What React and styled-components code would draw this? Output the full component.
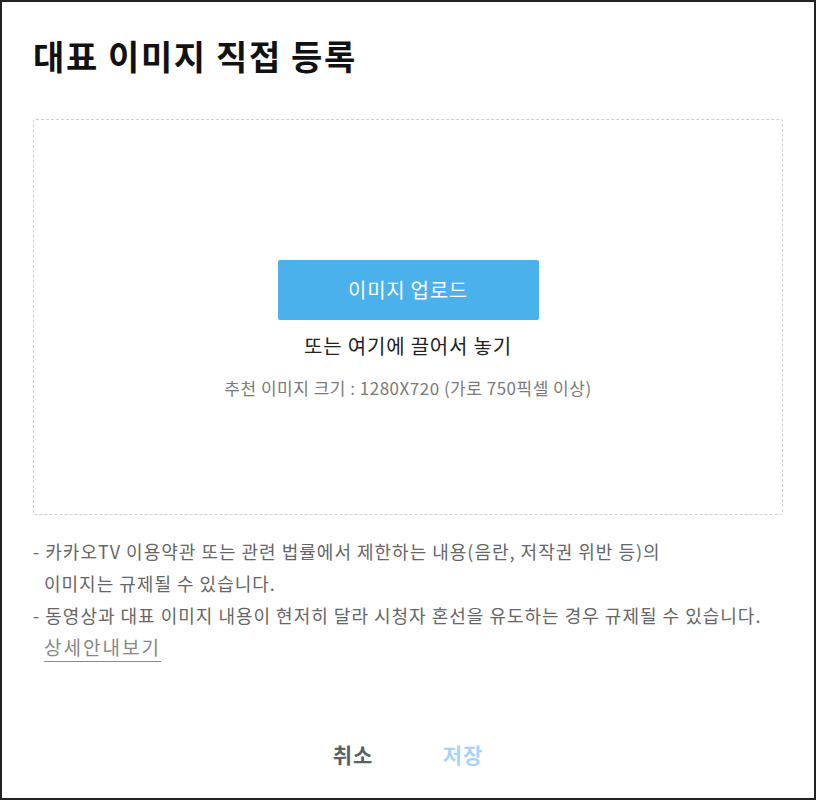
import React from 'react';
import styled, { createGlobalStyle } from 'styled-components';

const GlobalStyle = createGlobalStyle`
  html, body {
    margin: 0;
    padding: 0;
    background: #fff;
  }

  body {
    font-family: "Noto Sans CJK KR", "Noto Sans", sans-serif;
  }
`;

function App() {
  return (
    <>
      <GlobalStyle />
      <Modal>
        <Title>대표 이미지 직접 등록</Title>
        <DropZone>
          <UploadButton type="button">이미지 업로드</UploadButton>
          <DropText>또는 여기에 끌어서 놓기</DropText>
          <Hint>추천 이미지 크기 : 1280X720 (가로 750픽셀 이상)</Hint>
        </DropZone>
        <NoteList>
          <Note>
            - 카카오TV 이용약관 또는 관련 법률에서 제한하는 내용(음란, 저작권 위반 등)의
            <br />
            이미지는 규제될 수 있습니다.
          </Note>
          <Note>
            - 동영상과 대표 이미지 내용이 현저히 달라 시청자 혼선을 유도하는 경우 규제될 수 있습니다.
            <br />
            <GuideLink href="#">상세안내보기</GuideLink>
          </Note>
        </NoteList>
        <Footer>
          <FooterButton type="button">취소</FooterButton>
          <FooterButton type="button" primary disabled>저장</FooterButton>
        </Footer>
      </Modal>
    </>
  );
}

export default App;

const Modal = styled.div`
  box-sizing: border-box;
  display: flex;
  flex-direction: column;
  width: 816px;
  height: 800px;
  padding: 32px 31px 19px;
  border: 2px solid #222;
  background: #fff;
`;

const Title = styled.h1`
  margin: 0;
  color: #111;
  font-size: 34px;
  font-weight: 700;
  line-height: 44px;
  letter-spacing: 1.6px;
`;

const DropZone = styled.div`
  box-sizing: border-box;
  display: flex;
  flex-direction: column;
  align-items: center;
  height: 396px;
  margin-top: 41px;
  padding-top: 140px;
  border: 1px dashed #cfcfcf;
  border-radius: 3px;
`;

const UploadButton = styled.button`
  width: 261px;
  height: 60px;
  padding-bottom: 3px;
  border: 0;
  border-radius: 2px;
  background: #4bb1ed;
  color: #fff;
  font-family: inherit;
  font-size: 20px;
  font-weight: 400;
  letter-spacing: 0.7px;
  cursor: pointer;
`;

const DropText = styled.p`
  margin: 12px 0 0;
  color: #222;
  font-size: 20px;
  line-height: 28px;
  letter-spacing: 0.8px;
`;

const Hint = styled.p`
  margin: 16px 0 0;
  color: #7a7a7a;
  font-size: 17px;
  line-height: 24px;
  letter-spacing: 0.5px;
`;

const NoteList = styled.div`
  margin-top: 20px;
`;

const Note = styled.p`
  margin: 0;
  padding-left: 11px;
  text-indent: -11px;
  color: #666;
  font-size: 18px;
  line-height: 32px;
  letter-spacing: 1px;
`;

const GuideLink = styled.a`
  display: inline-block;
  text-indent: 0;
  font-size: 19px;
  line-height: 28px;
  letter-spacing: 2px;
  color: #888;
  text-decoration: none;
  border-bottom: 1px solid #888;
`;

const Footer = styled.div`
  display: flex;
  justify-content: center;
  margin-top: auto;
`;

const FooterButton = styled.button`
  width: 110px;
  height: 50px;
  padding: 0;
  border: 0;
  background: none;
  color: ${(p) => (p.primary ? '#a9d3fa' : '#5b5f66')};
  font-family: inherit;
  font-size: 21px;
  font-weight: 700;
  letter-spacing: 1px;
  cursor: ${(p) => (p.disabled ? 'default' : 'pointer')};
`;
